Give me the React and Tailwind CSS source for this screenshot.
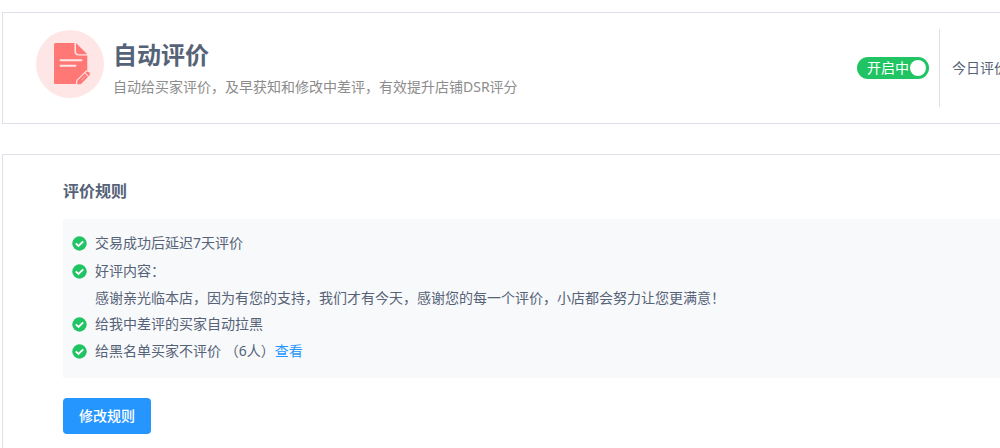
import { useState } from 'react'

const initialRules = {
  delay: '交易成功后延迟7天评价',
  content: '感谢亲光临本店，因为有您的支持，我们才有今天，感谢您的每一个评价，小店都会努力让您更满意！',
  blacklistCount: 6
}

function CheckIcon() {
  return (
    <svg viewBox="0 0 15 15" className="h-[15px] w-[15px] shrink-0" aria-hidden="true">
      <circle cx="7.5" cy="7.5" r="7.2" fill="#21c462" />
      <path d="M3.800 7.300l2.700 2.700 4.700-4.700" fill="none" stroke="#fff" strokeWidth="1.900" />
    </svg>
  )
}

function ReviewIcon() {
  return (
    <svg viewBox="0 0 68 68" className="h-[68px] w-[68px] shrink-0" aria-hidden="true">
      <circle cx="34" cy="34" r="34" fill="#ffe6e6" />
      <path d="M19.500 13H38.500v8.500q0 4 4 4H51.300V42L39.500 54H19.500q-1.500 0-1.500-1.500V14.500q0-1.500 1.500-1.500z" fill="#ff7875" />
      <path d="M40 13L51.300 24.200H43q-3 0-3-3z" fill="#ff7875" />
      <path d="M24.500 30.300h21M24.500 35.700h15" stroke="#ffe6e6" strokeWidth="2" strokeLinecap="round" />
      <g transform="translate(40.500 55) rotate(-45)">
        <path d="M0 0L3.500-3H16q2.500 0 2.500 3t-2.500 3H3.500z" fill="#ff7875" stroke="#ffe6e6" strokeWidth="1.200" />
        <path d="M6.500 0h6" stroke="#ffa6a4" strokeWidth="1" />
        <path d="M14.500-2.600v5.200" stroke="#ffe6e6" strokeWidth="1" />
      </g>
    </svg>
  )
}

function Rule({ children }) {
  return (
    <li className="flex items-center gap-2">
      <CheckIcon />
      <span>{children}</span>
    </li>
  )
}

export default function App() {
  const [enabled, setEnabled] = useState(true)
  const { delay, content, blacklistCount } = initialRules

  return (
    <main className="h-screen overflow-hidden bg-white pt-3 pl-0.5 font-['Noto_Sans','Noto_Sans_CJK_SC',sans-serif] text-sm text-[#556277]">
      <header className="flex border border-r-0 border-[#dce1e8] py-4 pl-[33px]">
        <div className="flex grow gap-[9px]">
          <div className="pt-px">
            <ReviewIcon />
          </div>
          <div className="pt-2">
            <h1 className="text-2xl leading-9 font-bold">自动评价</h1>
            <p className="leading-7 text-[#8c8c8c]">自动给买家评价，及早获知和修改中差评，有效提升店铺DSR评分</p>
          </div>
        </div>
        <div className="flex items-center">
          <button
            type="button"
            role="switch"
            aria-checked={enabled}
            onClick={() => setEnabled(!enabled)}
            className="mr-2.5 flex h-[22px] w-[72px] items-center justify-between rounded-full bg-[#21c462] pr-[3px] pl-2.5 text-white"
          >
            <span className="whitespace-nowrap">开启中</span>
            <span className="h-4 w-4 rounded-full bg-white" />
          </button>
          <div className="flex h-[78px] w-[61px] items-center overflow-hidden border-l border-[#dce1e8] pl-3 whitespace-nowrap">
            <span>今日评价</span>
          </div>
        </div>
      </header>

      <section className="mt-[30px] border border-r-0 border-[#dce1e8] pt-5 pb-8 pl-[60px]">
        <h2 className="mb-3 text-base leading-8 font-bold">评价规则</h2>
        <ul className="bg-[#f8f9fb] pt-2.5 pb-[13px] pl-[9px] leading-7">
          <Rule>{delay}</Rule>
          <Rule>好评内容：</Rule>
          <li className="pl-[23px] leading-[26px]">{content}</li>
          <li className="flex items-center gap-2 leading-[26px]">
            <CheckIcon />
            <span>给我中差评的买家自动拉黑</span>
          </li>
          <Rule>
            给黑名单买家不评价 （{blacklistCount}人）<a href="#blacklist" className="text-[#2696ff]">查看</a>
          </Rule>
        </ul>
        <button type="button" className="mt-5 h-9 rounded bg-[#2696ff] px-4 font-medium text-white">
          修改规则
        </button>
      </section>
    </main>
  )
}
